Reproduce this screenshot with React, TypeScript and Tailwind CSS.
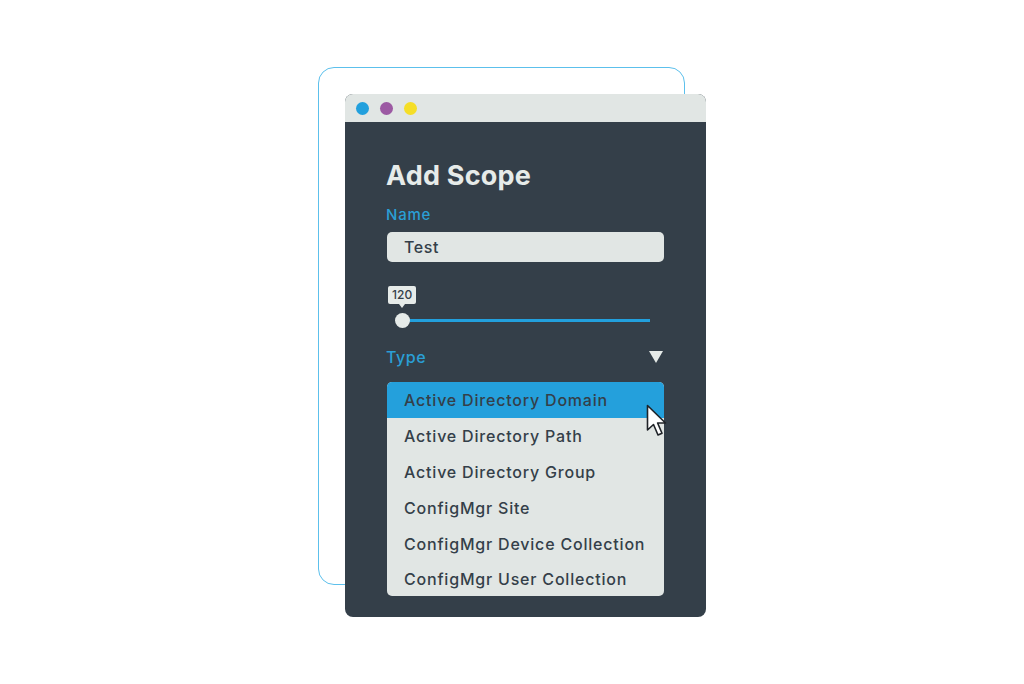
import React from 'react'

const OPTIONS = [
  'Active Directory Domain',
  'Active Directory Path',
  'Active Directory Group',
  'ConfigMgr Site',
  'ConfigMgr Device Collection',
  'ConfigMgr User Collection',
]

const Cursor = () => (
  <svg width="22" height="36" viewBox="0 0 22 36" className="absolute left-[646px] top-[404px]">
    <path
      d="M1.5 1.5 L1.5 26 L7.5 20.5 L12 31 L16 29.2 L11.6 19 L19.5 19 Z"
      fill="#ffffff"
      stroke="#1f2328"
      strokeWidth="1.6"
      strokeLinejoin="round"
    />
  </svg>
)

export default function App() {
  return (
    <div className="relative w-[1024px] h-[684px] bg-white overflow-hidden" style={{ fontFamily: 'Inter, "Liberation Sans", sans-serif' }}>
      <div className="pl-[318px] pt-[67px]">
        {/* outline card behind the window */}
        <div className="relative w-[367px] h-[518px] rounded-[16px] border border-[#5cc0ec]">
          {/* window */}
          <div className="absolute left-[26px] top-[26px] w-[361px] h-[523px] rounded-[8px] overflow-hidden bg-[#343f49] flex flex-col">
            <div className="h-[28px] bg-[#e1e6e4] flex items-center gap-[11px] pl-[11px] shrink-0">
              <span className="w-[13px] h-[13px] rounded-full bg-[#22a0dd]" />
              <span className="w-[13px] h-[13px] rounded-full bg-[#9c5aa3]" />
              <span className="w-[13px] h-[13px] rounded-full bg-[#f5de27]" />
            </div>
            <div className="pl-[41px] pr-[42px] pt-[37px] flex flex-col">
              <h1 className="text-[27px] leading-[34px] font-bold text-[#e6ebe9] tracking-[0.2px]">Add Scope</h1>
              <div className="mt-[13px] text-[15px] leading-[18px] font-medium text-[#2a9fd6] tracking-[0.8px]">Name</div>
              <div className="mt-[8px] ml-[1px] h-[30px] rounded-[5px] bg-[#e1e6e4] flex items-center pl-[17px] text-[16px] font-medium text-[#343f49] tracking-[0.6px]">
                Test
              </div>
              {/* slider */}
              <div className="relative mt-[24px] h-[44px]">
                <div className="absolute left-[2px] top-0 flex flex-col items-start">
                  <div className="px-[4px] h-[18px] bg-[#e6ebe9] rounded-[2px] text-[12px] leading-[18px] font-medium text-[#343f49]">120</div>
                  <div className="ml-[11px] w-0 h-0 border-l-[3px] border-r-[3px] border-t-[4px] border-l-transparent border-r-transparent border-t-[#e6ebe9]" />
                </div>
                <div className="absolute left-[16px] right-[14px] top-[33px] h-[3px] bg-[#22a0dd]" />
                <div className="absolute left-[9px] top-[27px] w-[15px] h-[15px] rounded-full bg-[#e6ebe9]" />
              </div>
              <div className="mt-[17px] flex items-center justify-between">
                <span className="text-[16px] leading-[20px] font-medium text-[#2a9fd6] tracking-[0.6px]">Type</span>
                <svg width="14" height="12" viewBox="0 0 14 12" className="mr-[1px]">
                  <path d="M0 0 H14 L7 12 Z" fill="#e6ebe9" />
                </svg>
              </div>
              <div className="mt-[15px] ml-[1px] rounded-[5px] overflow-hidden bg-[#e1e6e4] flex flex-col">
                {OPTIONS.map((o, i) => (
                  <div
                    key={o}
                    className={
                      (i === 0 ? 'bg-[#24a0dc] h-[36px] ' : i === OPTIONS.length - 1 ? 'h-[34px] ' : 'h-[36px] ') +
                      'flex items-center pl-[17px] text-[16px] font-medium text-[#343f49] tracking-[0.8px]'
                    }
                  >
                    {o}
                  </div>
                ))}
              </div>
            </div>
          </div>
        </div>
      </div>
      <Cursor />
    </div>
  )
}
